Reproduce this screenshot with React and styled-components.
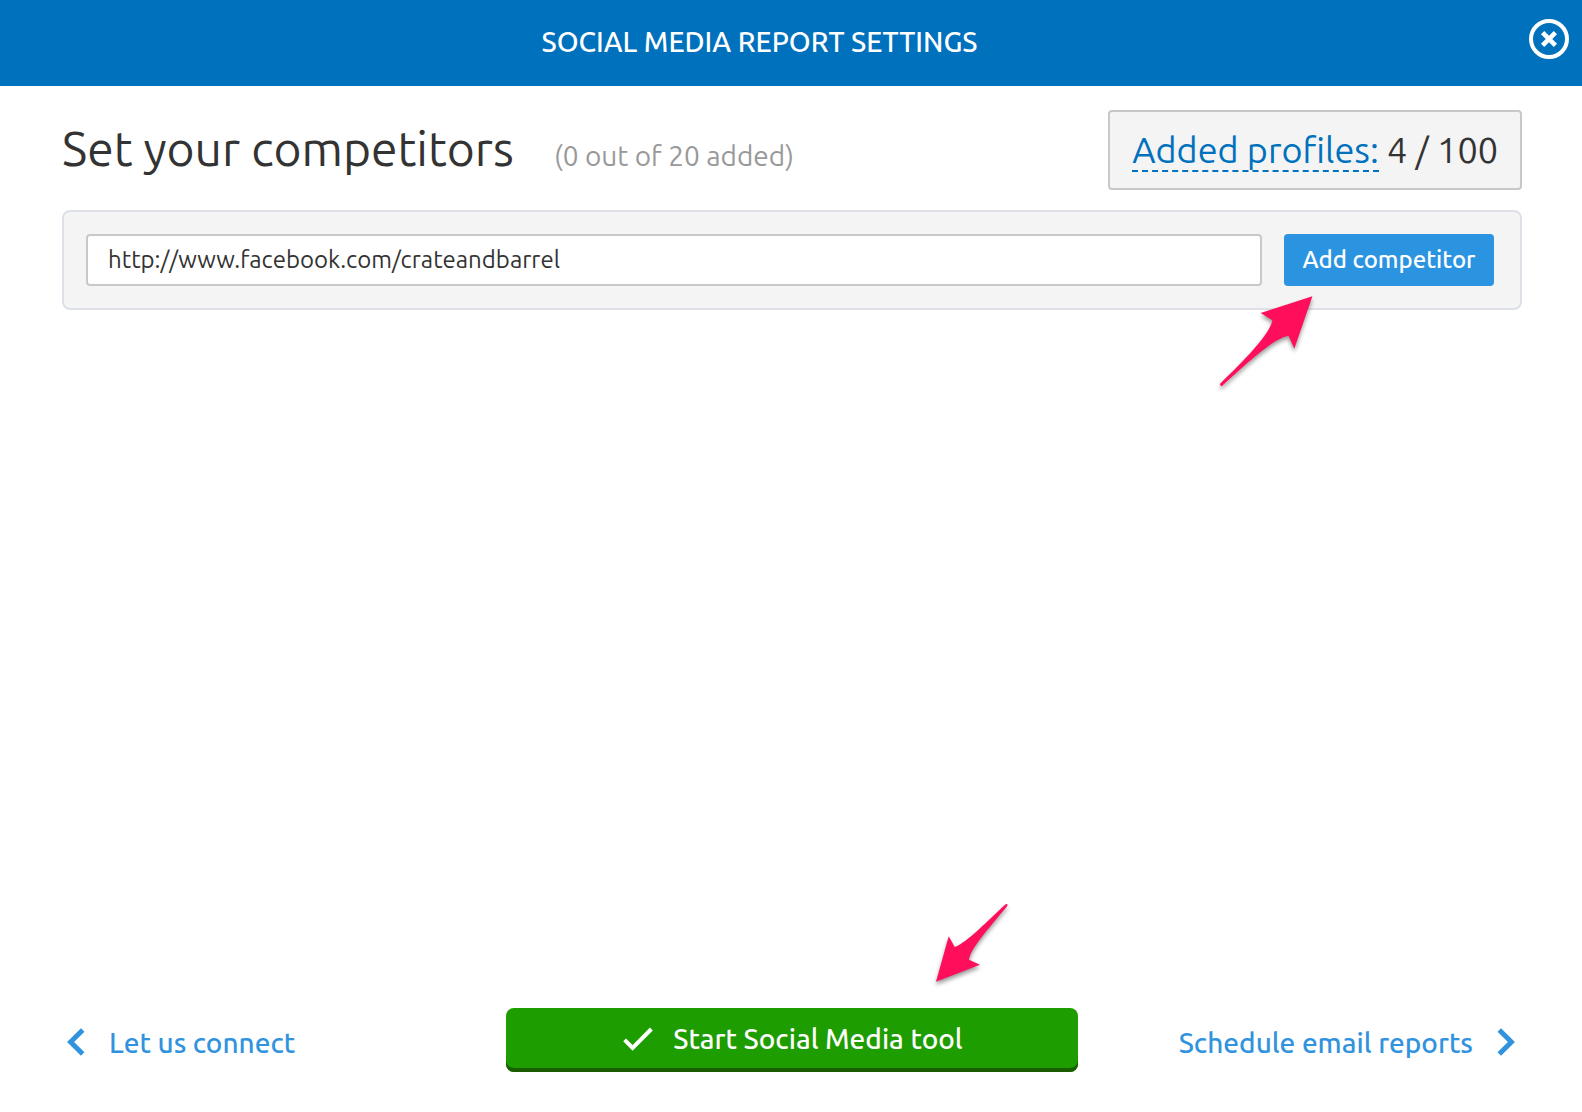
import React, { useState } from "react";
import styled, { createGlobalStyle } from "styled-components";

const App = () => {
  const [url, setUrl] = useState("http://www.facebook.com/crateandbarrel");

  return (
    <Page>
      <GlobalStyle />
      <Header>
        <Title>SOCIAL MEDIA REPORT SETTINGS</Title>
        <CloseButton type="button" aria-label="Close">
          <svg width="40" height="40" viewBox="0 0 40 40" fill="none" stroke="#fff">
            <circle cx="20" cy="20" r="18" strokeWidth="4" />
            <path d="M13.6 13.6 L26.4 26.4 M26.4 13.6 L13.6 26.4" strokeWidth="4.6" />
          </svg>
        </CloseButton>
      </Header>

      <Main>
        <HeadingRow>
          <HeadingGroup>
            <Heading>Set your competitors</Heading>
            <Counter>(0 out of 20 added)</Counter>
          </HeadingGroup>
          <Profiles>
            <ProfilesLink href="#profiles">Added profiles:</ProfilesLink> 4 / 100
          </Profiles>
        </HeadingRow>

        <AddForm onSubmit={(e) => e.preventDefault()}>
          <UrlInput
            type="text"
            aria-label="Competitor URL"
            value={url}
            onChange={(e) => setUrl(e.target.value)}
          />
          <Anchor>
            <AddButton type="submit">Add competitor</AddButton>
            <AddArrow width="106" height="104" viewBox="0 0 106 104">
              <path d="M98.4 6.3 L46.7 23 L58.3 30.3 C57 43 29 72 6.3 93.5 Q5.4 95.5 7.8 96.2 C30 76 58 49 74.5 45.8 L80.3 58.7 Z" />
            </AddArrow>
          </Anchor>
        </AddForm>
      </Main>

      <Footer>
        <StepLink href="#connect">
          <svg width="18" height="28" viewBox="0 0 18 28" fill="none" stroke="currentColor" strokeWidth="5">
            <path d="M15.7 2 L3.6 14 L15.7 26" />
          </svg>
          Let us connect
        </StepLink>
        <Anchor>
          <StartButton type="button">
            <svg width="30" height="24" viewBox="0 0 30 24" fill="none" stroke="currentColor" strokeWidth="4">
              <path d="M1.6 12.8 L9.6 20.8 L28.4 2" />
            </svg>
            Start Social Media tool
          </StartButton>
          <StartArrow width="86" height="92" viewBox="0 0 86 92">
            <path d="M6 83.7 L18.7 38.3 L24.7 49 C38 44 58 22 75.6 6.2 Q78 5.4 77.4 7.8 C62 27 41 49 39 61.7 L50 66.7 Z" />
          </StartArrow>
        </Anchor>
        <StepLink href="#schedule" $end>
          Schedule email reports
          <svg width="18" height="28" viewBox="0 0 18 28" fill="none" stroke="currentColor" strokeWidth="5">
            <path d="M2.3 2 L14.4 14 L2.3 26" />
          </svg>
        </StepLink>
      </Footer>
    </Page>
  );
};

const GlobalStyle = createGlobalStyle`
  * {
    box-sizing: border-box;
  }

  body {
    margin: 0;
    background: #fff;
    color: #333;
    font-family: Ubuntu, "Noto Sans", sans-serif;
  }

  button,
  input {
    font-family: inherit;
  }

  svg {
    display: block;
    flex-shrink: 0;
  }
`;

const Page = styled.div`
  display: flex;
  flex-direction: column;
  min-height: 100vh;
`;

const Header = styled.header`
  display: flex;
  align-items: center;
  gap: 10px;
  padding: 19px 13px 27px 0;
  background: #0071bc;
  color: #fff;
`;

const Title = styled.h1`
  flex: 1;
  margin: 0;
  padding-top: 6px;
  font-size: 28px;
  line-height: 34px;
  font-weight: 500;
  text-align: center;
`;

const CloseButton = styled.button`
  padding: 0;
  border: none;
  background: none;
  cursor: pointer;
`;

const Main = styled.main`
  flex: 1;
  padding: 24px 60px 24px 62px;
`;

const HeadingRow = styled.div`
  display: flex;
  align-items: flex-start;
  justify-content: space-between;
  margin-bottom: 20px;
`;

const HeadingGroup = styled.div`
  display: flex;
  align-items: baseline;
  gap: 40px;
`;

const Heading = styled.h2`
  margin: 0;
  font-size: 48px;
  line-height: 76px;
  font-weight: 400;
`;

const Counter = styled.span`
  color: #999;
  font-size: 28px;
`;

const Profiles = styled.div`
  padding: 14px 22px;
  border: 2px solid #c8c8c8;
  border-radius: 4px;
  background: #f4f4f4;
  font-size: 36px;
  line-height: 48px;
  white-space: nowrap;
`;

const ProfilesLink = styled.a`
  display: inline-block;
  border-bottom: 2px dashed #0071bc;
  color: #0071bc;
  line-height: 40px;
  text-decoration: none;
`;

const AddForm = styled.form`
  display: flex;
  gap: 22px;
  padding: 22px 26px 22px 22px;
  border: 2px solid #dde1e7;
  border-radius: 8px;
  background: #f4f4f4;
`;

const UrlInput = styled.input`
  flex: 1;
  min-width: 0;
  height: 52px;
  padding: 0 20px 2px;
  border: 2px solid #c8c8c8;
  border-radius: 4px;
  background: #fff;
  color: #333;
  font-size: 24px;
  outline: none;
`;

const Anchor = styled.div`
  position: relative;
`;

const AddButton = styled.button`
  min-width: 210px;
  height: 52px;
  padding: 0 18px 2px;
  border: none;
  border-radius: 4px;
  background: #2b94e1;
  color: #fff;
  font-size: 24px;
  font-weight: 500;
  white-space: nowrap;
  cursor: pointer;
`;

const Arrow = styled.svg`
  position: absolute;
  fill: #ff0f5b;
  filter: drop-shadow(0 3px 2px rgba(0, 0, 0, 0.4));
  pointer-events: none;
`;

const AddArrow = styled(Arrow)`
  top: 56px;
  left: -70px;
`;

const StartArrow = styled(Arrow)`
  top: -110px;
  left: calc(50% + 138px);
`;

const Footer = styled.footer`
  display: grid;
  grid-template-columns: 1fr minmax(auto, 572px) 1fr;
  align-items: center;
  padding: 0 60px 40px 62px;
`;

const StepLink = styled.a`
  display: flex;
  align-items: center;
  justify-content: ${(props) => (props.$end ? "flex-end" : "flex-start")};
  gap: 24px;
  padding: 4px 7px 0 5px;
  color: #3193de;
  font-size: 28px;
  font-weight: 500;
  text-decoration: none;
  white-space: nowrap;
`;

const StartButton = styled.button`
  display: flex;
  align-items: center;
  justify-content: center;
  gap: 20px;
  width: 100%;
  height: 64px;
  padding: 0 22px 3px 24px;
  border: none;
  border-radius: 8px;
  background: #1d9d00;
  box-shadow: inset 0 -4px 0 #1a5c00;
  color: #fff;
  font-size: 28px;
  font-weight: 500;
  cursor: pointer;
`;

export default App;
